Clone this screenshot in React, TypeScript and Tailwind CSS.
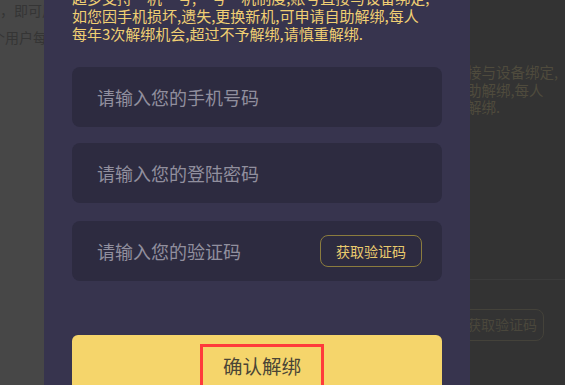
import React from 'react';

const font = { fontFamily: '"Noto Sans CJK SC", "Noto Sans", sans-serif' };

const Field = ({ placeholder, className = '', children }: { placeholder: string; className?: string; children?: React.ReactNode }) => (
  <div className={`flex h-[60px] items-center rounded-[8px] bg-[#2d2b40] pl-[25px] pr-[20px] ${className}`}>
    <input
      type="text"
      placeholder={placeholder}
      className="min-w-0 flex-1 bg-transparent text-[18px] text-[#d8d6e0] outline-none placeholder:text-[#918f9e]"
    />
    {children}
  </div>
);

const notice = [
  '超多支持一机一号,一号一机制度,账号直接与设备绑定,',
  '如您因手机损坏,遗失,更换新机,可申请自助解绑,每人',
  '每年3次解绑机会,超过不予解绑,请慎重解绑.',
];

export default function App() {
  return (
    <div className="flex h-[385px] w-[565px] overflow-hidden bg-[#333333]" style={font}>
      {/* page behind, left edge */}
      <div className="flex w-[44px] shrink-0 flex-col items-end overflow-hidden bg-[#474747] text-[14px] leading-[20px] text-[#353535]">
        <div className="-mr-[12px] whitespace-nowrap">绑定后，即可用</div>
        <div className="mt-[7px] -mr-[3px] whitespace-nowrap">每个用户每</div>
      </div>

      {/* dialog */}
      <div className="w-[426px] shrink-0 bg-[#37344e] px-[28px]">
        <div className="mt-[-11px] text-[15px] leading-[18px] text-[#f0cf73]">
          {notice.map((line) => (
            <div key={line} className="whitespace-nowrap">{line}</div>
          ))}
        </div>

        <Field placeholder="请输入您的手机号码" className="mt-[24px]" />
        <Field placeholder="请输入您的登陆密码" className="mt-[16px]" />
        <Field placeholder="请输入您的验证码" className="mt-[18px]">
          <button className="h-[32px] shrink-0 rounded-[8px] border border-[#8b7c3e] px-[15px] text-[14px] text-[#e9ca6e]">
            获取验证码
          </button>
        </Field>

        <button className="mt-[54px] flex h-[60px] w-full items-start justify-center rounded-[6px] bg-[#f5d56b] pt-[9px]">
          <span className="ml-[10px] border-[3px] border-[#ff3b3b] px-[20px] py-[5px] text-[19.5px] leading-[28px] text-[#4a4536]">
            确认解绑
          </span>
        </button>
      </div>

      {/* page behind, right edge */}
      <div className="flex min-w-0 flex-1 flex-col overflow-hidden text-[14.5px] leading-[17.5px] text-[#4f4b3d]">
        <div className="mt-[63px] -ml-[3px] whitespace-nowrap">接与设备绑定,</div>
        <div className="-ml-[3px] whitespace-nowrap">助解绑,每人</div>
        <div className="-ml-[3px] whitespace-nowrap">解绑.</div>
        <div className="mt-[134px] h-[30px] border-b border-[#3b3b3b]" />
        <div className="-ml-[10px] mt-[29px] flex h-[32px] w-[84px] items-center justify-center rounded-[8px] border border-[#44423a] text-[14px] text-[#4a473c]">
          获取验证码
        </div>
      </div>
    </div>
  );
}
